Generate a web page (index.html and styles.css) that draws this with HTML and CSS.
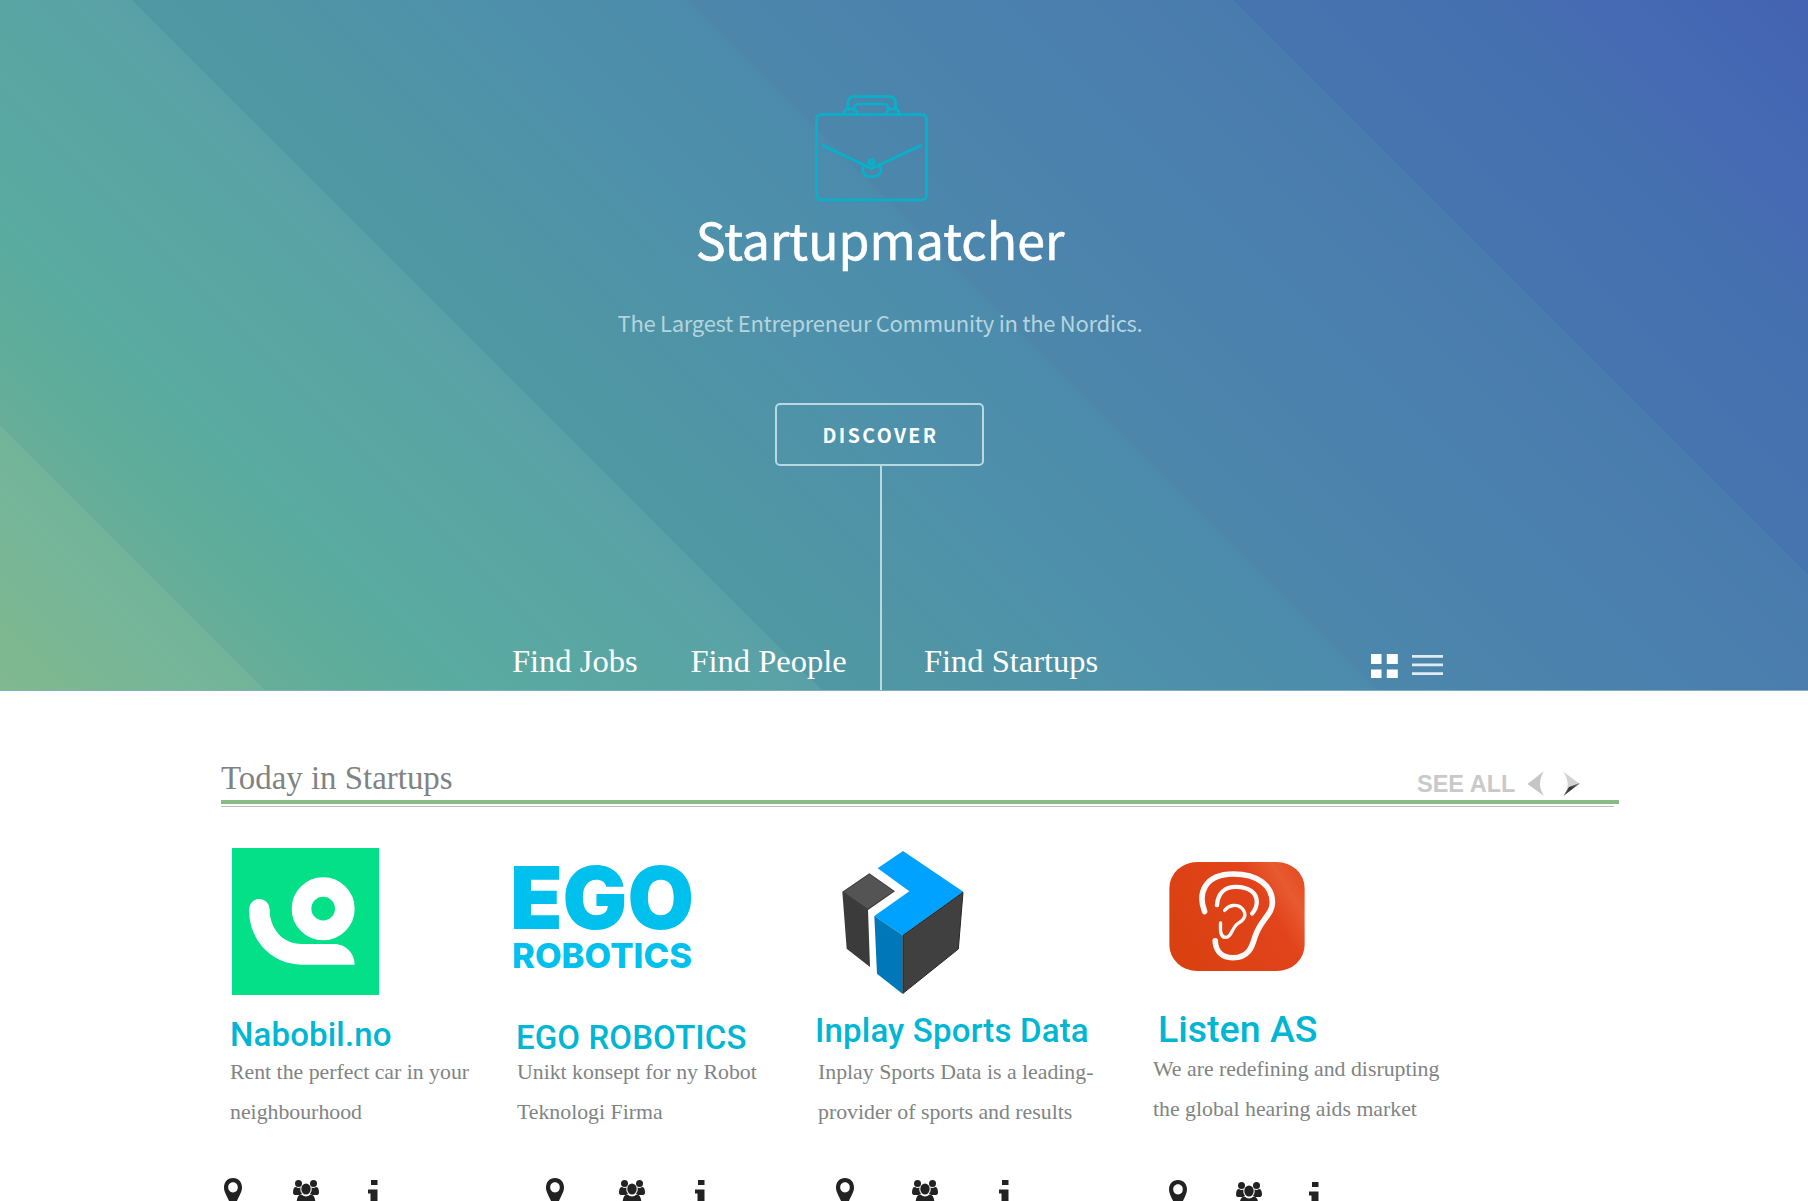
FILE: index.html
```html
<!DOCTYPE html>
<html lang="en">
<head>
<meta charset="utf-8">
<title>Startupmatcher</title>
<link rel="stylesheet" href="styles.css">
</head>
<body>
<svg class="sprite" aria-hidden="true">
  <symbol id="pin" viewBox="0 0 20 32"><path fill-rule="evenodd" d="M10 0C4.500 0 1 4 1 9.500C1 15 5 19 7.500 27L10 32L12.500 27C15 19 19 15 19 9.500C19 4 15.500 0 10 0ZM10 4.200C13 4.200 14.800 6.500 14.800 9.300S13 14.500 10 14.500S5.200 12 5.200 9.300S7 4.200 10 4.200Z"/></symbol>
  <symbol id="people" viewBox="0 0 26 30"><circle cx="5.500" cy="3.500" r="3.500"/><circle cx="20.500" cy="3.500" r="3.500"/><path d="M0 12.500C0 9 1 7 3 7C5 8.500 6.500 8 7.500 7.500C7 10 7.500 12 9 13.500L7 15H2C.8 15 0 14 0 12.500ZM26 12.500C26 9 25 7 23 7C21 8.500 19.500 8 18.500 7.500C19 10 18.500 12 17 13.500L19 15H24C25.200 15 26 14 26 12.500Z"/><ellipse cx="13" cy="9" rx="4.700" ry="5.500"/><path d="M3.500 25C3.500 18 5 14.500 8.500 14.500C11.500 17 14.500 17 17.500 14.500C21 14.500 22.500 18 22.500 25V30H3.500Z"/></symbol>
  <symbol id="info" viewBox="0 0 12 30"><path d="M3 0H9.500V5H3ZM0 9.500H9.500V25H12V29H0V25H2.500V13.500H0Z"/></symbol>
</svg>

<header class="hero">
  <div class="hero__intro">
    <svg class="briefcase" viewBox="814 94 114 109">
      <rect x="816.500" y="114.500" width="110" height="85.500" rx="5"/>
      <path d="M848 109V103Q848 96.500 854 96.500H889Q895.500 96.500 895.500 103V109"/>
      <path d="M854 109.500Q854 104 859 104H884Q888.500 104 888.500 109.500"/>
      <path d="M844 114Q844 109 849 109H852Q856.500 109 857 114M886 114Q886.500 109 891 109H894Q899 109 899 114"/>
      <path d="M823 145.500L871.500 168.500L921 145.500"/>
      <circle cx="871.500" cy="162" r="2.500"/>
      <path d="M865 166.500Q861.500 167 863 172Q865 176.500 869 176.500H874.500Q878.500 176.500 880.500 172Q882 167 878.500 166.500"/>
    </svg>
    <h1 class="hero__title">Startupmatcher</h1>
    <p class="hero__tagline">The Largest Entrepreneur Community in the Nordics.</p>
    <a class="discover">DISCOVER</a>
  </div>
  <nav class="nav">
    <a class="nav__link nav__link--jobs">Find Jobs</a>
    <a class="nav__link nav__link--people">Find People</a>
    <span class="nav__stem"></span>
    <a class="nav__link nav__link--startups">Find Startups</a>
    <svg class="nav__views" viewBox="1371 653 73 26">
      <path d="M1371 654h10.500v10h-10.500zM1386.800 654h11v10h-11zM1371 669.500h10.500v8.500h-10.500zM1386.800 669.500h11v8.500h-11z"/>
      <path class="nav__bars" d="M1412 655h31v2.700h-31zM1412 663.500h31v2.700h-31zM1412 672.200h31v2.700h-31z"/>
    </svg>
  </nav>
</header>

<main class="today">
  <div class="today__head">
    <h2 class="today__title">Today in Startups</h2>
    <a class="today__all">SEE ALL</a>
    <svg class="today__arrows" viewBox="1527 770 54 28">
      <defs><linearGradient id="shade" x1="0" y1="1" x2="1" y2="0"><stop offset="0" stop-color="#555"/><stop offset=".5" stop-color="#333"/><stop offset="1" stop-color="#777"/></linearGradient></defs>
      <path fill="#c6c6c6" d="M1527.500 784L1544 771Q1536 784 1544 796Z"/>
      <path fill="#d2d2d2" d="M1563 771.500L1580 784L1563.500 795.500Q1572 784 1563 771.500Z"/>
      <path fill="url(#shade)" d="M1580 783L1563.500 796L1569 787Z"/>
    </svg>
  </div>
  <div class="today__rule"></div>

  <section class="cards">
    <article class="card card--nabobil">
      <svg class="card__logo" viewBox="96 322 441 441">
        <path fill="#04e088" d="M96 322H537V763H96Z"/>
        <circle cx="369.500" cy="504" r="65" fill="none" stroke="#fff" stroke-width="59"/>
        <path fill="#fff" d="M147 506A31 31 0 0 1 209 506C209 565 248 610 305 610H402C437 610 464 637 464 672H308C215 672 147 600 147 506Z"/>
      </svg>
      <h3 class="card__name">Nabobil.no</h3>
      <p class="card__text">Rent the perfect car in your<br>neighbourhood</p>
      <div class="card__meta"><svg class="pin"><use href="#pin"/></svg><svg class="people"><use href="#people"/></svg><svg class="info"><use href="#info"/></svg></div>
    </article>
    <article class="card card--ego">
      <svg class="card__logo" viewBox="0 0 182 106">
        <text class="ego-mark" x="-2" y="64.500" textLength="184" lengthAdjust="spacingAndGlyphs">EGO</text>
        <text class="ego-word" x="0" y="103.500" textLength="180" lengthAdjust="spacingAndGlyphs">ROBOTICS</text>
      </svg>
      <h3 class="card__name">EGO ROBOTICS</h3>
      <p class="card__text">Unikt konsept for ny Robot<br>Teknologi Firma</p>
      <div class="card__meta"><svg class="pin"><use href="#pin"/></svg><svg class="people"><use href="#people"/></svg><svg class="info"><use href="#info"/></svg></div>
    </article>
    <article class="card card--inplay">
      <svg class="card__logo" viewBox="123 60 372 435">
        <path fill="#3b3b3b" d="M127 185L208 130L285 184L204 240L210 411L140 356Z"/>
        <path fill="#545454" d="M131 186L208 133L280 184L203 236Z"/>
        <path fill="#00a2ff" d="M309 63L490 185L308 316L223 258L328 184L233 115Z"/>
        <path fill="#0077b8" d="M223 258L308 316V492L231 431Z"/>
        <path fill="#404040" stroke="#2c2523" stroke-width="3" d="M309 316L489 187L475 357L309 490Z"/>
      </svg>
      <h3 class="card__name">Inplay Sports Data</h3>
      <p class="card__text">Inplay Sports Data is a leading-<br>provider of sports and results</p>
      <div class="card__meta"><svg class="pin"><use href="#pin"/></svg><svg class="people"><use href="#people"/></svg><svg class="info"><use href="#info"/></svg></div>
    </article>
    <article class="card card--listen">
      <svg class="card__logo" viewBox="118 65 407 328">
        <defs><linearGradient id="ember" x1="0" y1=".7" x2="1" y2=".2"><stop offset="0" stop-color="#d94110"/><stop offset=".7" stop-color="#e2431b"/><stop offset=".88" stop-color="#e85a30"/><stop offset="1" stop-color="#e54e24"/></linearGradient></defs>
        <rect x="118" y="65" width="407" height="328" rx="84" ry="78" fill="url(#ember)"/>
        <g fill="none" stroke="#fafafa" stroke-linecap="round" stroke-linejoin="round">
          <path stroke-width="17" d="M224 214C203 160 223 101 311 101C382 101 428 135 428 187C428 225 392 236 375 292C367 318 358 353 309 353C271 353 257 328 256 302"/>
          <path stroke-width="13" d="M261 195C264 158 286 139 320 140C354 141 381 155 381 185C381 200 375 210 367 220"/>
          <path stroke-width="10" d="M284 211C298 193 322 191 336 204C353 222 344 239 326 249C306 260 306 292 287 292C271 291 271 272 272 248"/>
        </g>
      </svg>
      <h3 class="card__name">Listen AS</h3>
      <p class="card__text">We are redefining and disrupting<br>the global hearing aids market</p>
      <div class="card__meta"><svg class="pin"><use href="#pin"/></svg><svg class="people"><use href="#people"/></svg><svg class="info"><use href="#info"/></svg></div>
    </article>
  </section>
</main>
</body>
</html>
```
FILE: styles.css
```css
* { box-sizing: border-box; }
body { margin: 0; height: 1201px; overflow: hidden; background: #fff; font-family: "Liberation Serif", serif; }
h1, h2, h3, p { margin: 0; font-weight: 400; white-space: nowrap; }
svg { display: block; flex: none; }
.sprite { display: none; }

/* Hero */
.hero {
  height: 691px;
  padding-top: 94px;
  border-bottom: 1px solid #7fb0bf;
  background: linear-gradient(45deg,
    #80b98f 0, #72b49b 10.6%,
    #67ae97 10.6%, #59ab9f 18%, #5aa1a7 32.9%,
    #5098a2 32.9%, #4e90ab 48%, #4c8bac 55%,
    #4c87ab 55.2%, #4a7baf 77%,
    #4774ae 77%, #4570b0 87%, #466cb4 90%, #4463b2 100%);
}
.hero__intro {
  display: flex;
  flex-direction: column;
  align-items: center;
  width: 1760px;
  height: 372px;
  font-family: "Noto Sans CJK SC", sans-serif;
  color: #fff;
}
.briefcase { width: 114px; height: 109px; margin-right: 18px; fill: none; stroke: #04b3cb; stroke-width: 2.700; stroke-linecap: round; }
.hero__title { margin-top: 5px; font-size: 50px; line-height: 60px; -webkit-text-stroke: .6px #fff; }
.hero__tagline { margin-top: 39px; font-size: 22px; line-height: 30px; letter-spacing: -.280px; color: #b4d5df; }
.discover {
  width: 209px;
  height: 63px;
  margin: 66px 2px 0 0;
  border: 2px solid #b9d8e1;
  border-radius: 5px;
  font-size: 19.500px;
  line-height: 60px;
  font-weight: 700;
  letter-spacing: 2.400px;
  text-indent: 3px;
  text-align: center;
}
.nav { display: flex; align-items: flex-end; height: 224px; padding-left: 512px; }
.nav__link { margin-bottom: 9px; font-size: 32.500px; line-height: 40px; color: #fff; white-space: nowrap; }
.nav__link--jobs { width: 178.500px; }
.nav__link--people { width: 189.500px; }
.nav__link--startups { width: 447px; margin-left: 42px; }
.nav__stem { width: 2px; height: 224px; background: #b9d8e1; }
.nav__views { width: 73px; height: 26px; margin-bottom: 11px; fill: #fff; }
.nav__bars { fill: #e1ebf2; }

/* Section heading */
.today { padding-left: 221px; }
.today__head { display: flex; height: 109px; padding-top: 66px; }
.today__title { width: 1196px; margin-top: 1px; font-size: 32.900px; line-height: 40px; color: #7f8483; }
.today__all { width: 110px; margin-top: 11px; font: bold 23.500px/32px "Liberation Sans", sans-serif; color: #c9c9c9; white-space: nowrap; }
.today__arrows { width: 54px; height: 28px; margin-top: 13px; }
.today__rule { width: 1398px; height: 7px; background: linear-gradient(#88bb88, #88bb88) 0 0 / 1398px 4px no-repeat, linear-gradient(#bdbdbd, #bdbdbd) 0 6px / 1393px 1px no-repeat; }

/* Cards */
.cards { display: grid; grid-template-columns: 287px 300px 336px 320px; padding-left: 9px; }
.card { display: flex; flex-direction: column; align-items: flex-start; }
.card__name { font-family: Roboto, sans-serif; font-weight: 500; font-size: 33px; line-height: 40px; color: #00b6d3; }
.card__text { font-size: 21.800px; line-height: 39.600px; color: #7f8483; }
.card__meta { display: flex; margin-top: 46px; fill: #222; }
.pin { width: 20px; height: 32px; }
.people { width: 26px; height: 30px; margin-top: 2px; }
.info { width: 12px; height: 30px; margin-top: 2px; }

.card--nabobil .card__logo { width: 147px; height: 147px; margin: 41px 0 0 2px; }
.card--nabobil .card__name { margin: 20px 0 0 0; letter-spacing: .15px; }
.card--nabobil .card__text { margin-top: -2px; }
.card--nabobil .card__meta { margin-left: -7px; }
.card--nabobil .people { margin-left: 50px; }
.card--nabobil .info { margin-left: 49px; }

.card--ego .card__logo { width: 182px; height: 106px; margin: 57px 0 0 -5px; overflow: visible; }
.card--ego .card__name { margin: 48px 0 0 -1px; letter-spacing: .1px; }
.card--ego .card__text { margin-top: -5px; }
.card--ego .card__meta { margin-left: 28px; }
.card--ego .people { margin-left: 54px; }
.card--ego .info { margin-left: 50px; }
.ego-mark, .ego-word { font-family: Inter, sans-serif; font-weight: 900; fill: #00c0ee; }
.ego-mark { font-size: 86px; }
.ego-word { font-size: 34px; font-weight: 800; }

.card--inplay .card__logo { width: 124px; height: 145px; margin: 43px 0 0 24px; }
.card--inplay .card__name { margin: 16px 0 0 -2px; letter-spacing: .18px; }
.card--inplay .card__text { margin: 2px 0 0 1px; }
.card--inplay .card__meta { margin-left: 18px; }
.card--inplay .people { margin-left: 57px; }
.card--inplay .info { margin-left: 61px; }

.card--listen .card__logo { width: 136px; height: 109px; margin: 55px 0 0 16px; }
.card--listen .card__name { margin: 38px 0 0 5px; font-size: 37.500px; }
.card--listen .card__text { margin-top: 1px; }
.card--listen .card__meta { margin: 51px 0 0 15px; }
.card--listen .people { margin-left: 48px; }
.card--listen .info { margin-left: 47px; }
```
